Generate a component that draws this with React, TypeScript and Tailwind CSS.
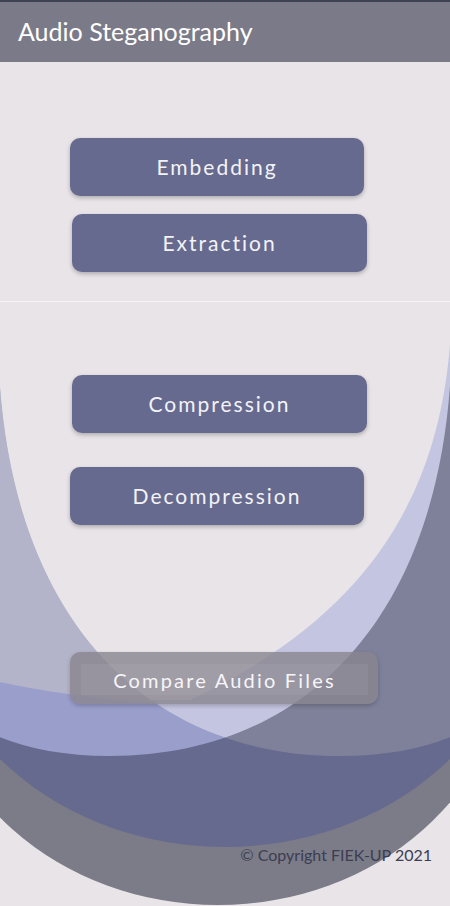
import React from 'react';

// background shapes, in page coordinates (the svg shows y 302..906)
const lPath = 'M 452 290 L 452 330 C 452 610 310 756 110 756 C 40 756 -10 738 -40 715 L -40 290 Z';
const rPath = 'M -2 290 L -2 330 C -2 610 140 756 340 756 C 410 756 460 738 490 715 L 490 290 Z';
const ePath = 'M 460 290 L 452 300 C 450 480 380 610 190 700 L -20 700 L -20 290 Z';
const bPath = 'M -40 290 L 260 290 L 260 706 C 170 706 60 700 -40 672 Z';

const Backdrop = () => (
  <svg className="absolute inset-0 w-full h-full" viewBox="0 302 450 604" preserveAspectRatio="none">
    <defs>
      <clipPath id="clipL">
        <path d={lPath} />
      </clipPath>
      <clipPath id="clipR">
        <path d={rPath} />
      </clipPath>
    </defs>
    <rect x="0" y="302" width="450" height="604" fill="#e8e4e8" />
    <ellipse cx="218" cy="648" rx="290" ry="257" fill="#7c7b88" />
    <ellipse cx="225" cy="587" rx="300" ry="260" fill="#676a8f" />
    <path d={lPath} fill="#9a9ecb" />
    <path d={bPath} fill="#b3b4c9" clipPath="url(#clipL)" />
    <path d={rPath} fill="#7e8199" />
    <path d={rPath} fill="#c4c5e0" clipPath="url(#clipL)" />
    <path d={ePath} fill="#e8e4e8" clipPath="url(#clipR)" />
  </svg>
);

const MenuButton = ({ label, className }: { label: string; className: string }) => (
  <button
    className={`h-[58px] rounded-[10px] bg-[#676a8f] text-[#f3f3f7] text-[21px] tracking-[2px] shadow-[0_2px_4px_rgba(0,0,0,0.25)] flex items-center justify-center ${className}`}
  >
    {label}
  </button>
);

export default function App() {
  return (
    <div className="w-[450px] h-[906px] flex flex-col overflow-hidden bg-[#e8e4e8] font-['Lato',sans-serif]">
      <header className="h-[62px] border-t-2 border-[#3d4352] bg-[#7b7a88] flex items-center px-[18px]">
        <h1 className="text-[25px] text-white">Audio Steganography</h1>
      </header>

      <section className="h-[240px] border-b border-[#f6f4f6] flex flex-col items-start">
        <MenuButton label="Embedding" className="mt-[76px] ml-[70px] w-[294px]" />
        <MenuButton label="Extraction" className="mt-[18px] ml-[72px] w-[295px]" />
      </section>

      <section className="relative flex-1 flex flex-col items-start">
        <Backdrop />
        <div className="relative flex flex-col items-start w-full">
          <MenuButton label="Compression" className="mt-[73px] ml-[72px] w-[295px]" />
          <MenuButton label="Decompression" className="mt-[34px] ml-[70px] w-[294px]" />
          <button className="mt-[127px] ml-[70px] w-[308px] h-[52px] rounded-[10px] bg-[#88858f]/80 shadow-[0_2px_4px_rgba(0,0,0,0.2)] flex pt-[12px] pr-[10px] pb-[9px] pl-[11px]">
            <span className="flex-1 bg-white/[0.05] flex items-center justify-center text-[20px] tracking-[2.2px] text-[#f6f5f8]">
              Compare Audio Files
            </span>
          </button>
          <p className="self-end mt-[141px] mr-[18px] text-[16px] leading-[20px] text-[#3b3e51]">
            © Copyright FIEK-UP 2021
          </p>
        </div>
      </section>
    </div>
  );
}
